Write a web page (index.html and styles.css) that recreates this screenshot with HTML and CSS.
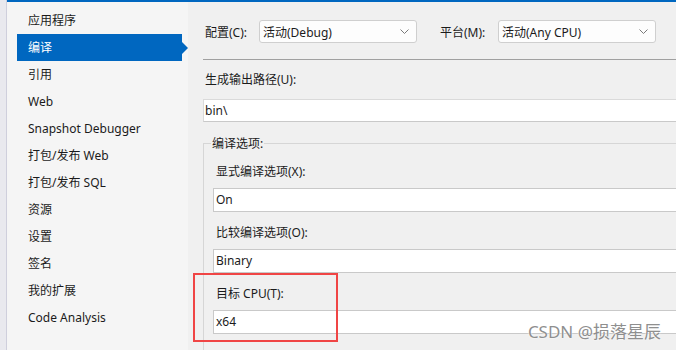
FILE: index.html
```html
<!DOCTYPE html>
<html lang="zh-CN">
<head>
    <meta charset="UTF-8">
    <title>项目属性 - 编译</title>
    <link rel="stylesheet" href="styles.css">
</head>
<body>

<div class="window">
    <div class="edge"></div>

    <div class="content">
        <!-- Property pages list -->
        <nav class="sidebar">
            <div class="nav-item">应用程序</div>
            <div class="nav-item selected">编译</div>
            <div class="nav-item">引用</div>
            <div class="nav-item">Web</div>
            <div class="nav-item">Snapshot Debugger</div>
            <div class="nav-item">打包/发布 Web</div>
            <div class="nav-item">打包/发布 SQL</div>
            <div class="nav-item">资源</div>
            <div class="nav-item">设置</div>
            <div class="nav-item">签名</div>
            <div class="nav-item">我的扩展</div>
            <div class="nav-item">Code Analysis</div>
        </nav>

        <main class="page">
            <div class="config-row">
                <label class="config-label">配置(C):</label>
                <div class="dropdown">
                    <span>活动(Debug)</span>
                    <svg width="9" height="5" viewBox="0 0 9 5"><path d="M0.5 0.5 L4.5 4.5 L8.5 0.5" fill="none" stroke="#7a7a7a" stroke-width="1"/></svg>
                </div>
                <label class="config-label platform">平台(M):</label>
                <div class="dropdown">
                    <span>活动(Any CPU)</span>
                    <svg width="9" height="5" viewBox="0 0 9 5"><path d="M0.5 0.5 L4.5 4.5 L8.5 0.5" fill="none" stroke="#7a7a7a" stroke-width="1"/></svg>
                </div>
            </div>

            <div class="separator"></div>

            <div class="field output">
                <label>生成输出路径(U):</label>
                <div class="textbox wide">bin\</div>
            </div>

            <fieldset class="group">
                <legend>编译选项:</legend>

                <div class="field first">
                    <label>显式编译选项(X):</label>
                    <div class="textbox">On</div>
                </div>

                <div class="field">
                    <label>比较编译选项(O):</label>
                    <div class="textbox">Binary</div>
                </div>

                <div class="field marked">
                    <label>目标 CPU(T):</label>
                    <div class="textbox">x64</div>
                </div>
            </fieldset>
        </main>
    </div>

    <div class="watermark">CSDN @损落星辰</div>
</div>

</body>
</html>
```

FILE: styles.css
```css
html, body {
    margin: 0;
    height: 100%;
}
body {
    font-family: "Noto Sans", "Noto Sans CJK SC", sans-serif;
    font-size: 12px;
    color: #1b1b1b;
    background-color: #f0f0f0;
    overflow: hidden;
}
.window {
    position: relative;
    display: flex;
    height: 350px;
}
.edge {
    width: 6px;
    background-color: #e9e9ee;
    border-right: 1px solid #cfcfdc;
}
.content {
    flex: 1;
    display: flex;
    border-top: 2px solid #0067c0;
    min-width: 0;
}
.sidebar {
    width: 181px;
    background-color: #f5f5f5;
    padding-top: 5px;
}
.nav-item {
    position: relative;
    height: 27px;
    line-height: 27px;
    margin-left: 10px;
    width: 165px;
    padding-left: 11px;
    box-sizing: border-box;
    white-space: nowrap;
}
.nav-item.selected {
    background-color: #0067c0;
    color: white;
}
.nav-item.selected::after {
    content: "";
    position: absolute;
    right: -6px;
    top: 8px;
    border-left: 6px solid #0067c0;
    border-top: 6px solid transparent;
    border-bottom: 6px solid transparent;
}
.page {
    flex: 1;
    min-width: 0;
    padding: 18px 0 0 15px;
    overflow: hidden;
}
.config-row {
    display: flex;
    align-items: center;
    height: 23px;
}
.config-label {
    width: 54px;
    padding-left: 2px;
    white-space: nowrap;
}
.config-label.platform {
    width: 58px;
    padding-left: 0;
    margin-left: 23px;
}
.dropdown {
    width: 158px;
    height: 23px;
    box-sizing: border-box;
    display: flex;
    align-items: center;
    justify-content: space-between;
    padding: 0 7px 0 3px;
    background-color: #fdfdfd;
    border: 1px solid #cfcfcf;
    border-radius: 3px;
}
.separator {
    height: 1px;
    background-color: #a0a0a0;
    margin-top: 16px;
}
.field label {
    display: block;
    line-height: 17px;
    margin-bottom: 8px;
    padding-left: 3px;
    white-space: nowrap;
}
.field.output {
    padding-top: 11px;
}
.field.output label {
    padding-left: 2px;
    margin-bottom: 11px;
}
.textbox {
    height: 24px;
    line-height: 22px;
    box-sizing: border-box;
    padding-left: 2px;
    margin-right: -10px;
    background-color: white;
    border: 1px solid #c9c9c9;
    white-space: nowrap;
}
.textbox.wide {
    height: 23px;
    line-height: 21px;
    padding-left: 1px;
    border-width: 1px 0 1px 1px;
    border-color: #dadada #c9c9c9 #c9c9c9 #dadada;
}
.field {
    position: relative;
    padding-top: 12px;
}
.field.first {
    padding-top: 11px;
}
.group {
    margin: 13px -20px 0 0;
    padding: 0 0 20px 9px;
    border: 1px solid #d6d6d6;
    min-width: 0;
}
.group legend {
    margin-left: -2px;
    padding: 0 1px;
    line-height: 17px;
}
.field.marked::after {
    content: "";
    position: absolute;
    left: -20px;
    top: 0;
    width: 141px;
    height: 65px;
    border: 2px solid #f04545;
}
.watermark {
    position: absolute;
    right: 15px;
    bottom: 8px;
    font-family: "Noto Sans", "Noto Sans CJK SC", sans-serif;
    font-size: 17px;
    line-height: 20px;
    color: #8f8f8f;
    text-shadow: 0 0 2px #ffffff, 0 0 1px #ffffff;
}
```
